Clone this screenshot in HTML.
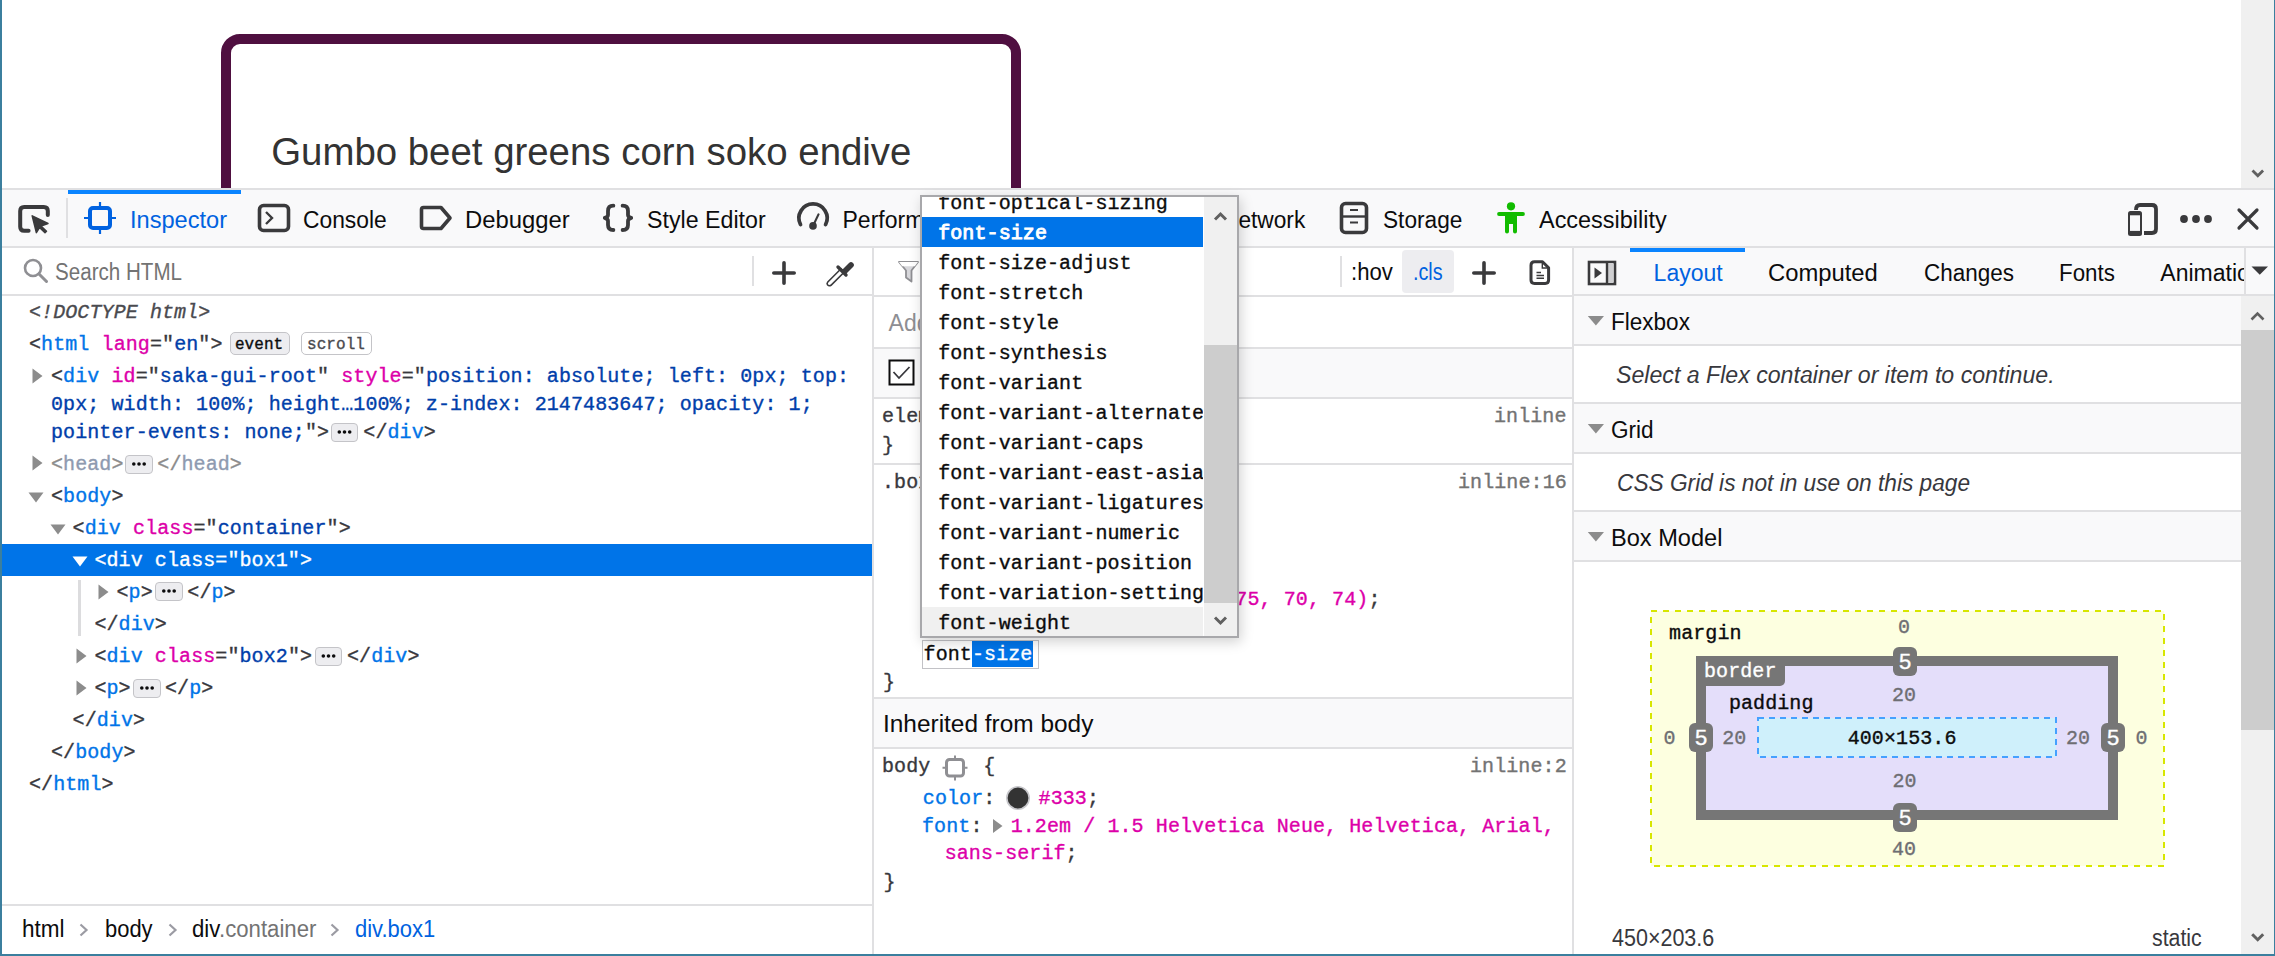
<!DOCTYPE html>
<html lang="en"><head><meta charset="utf-8"><title>DevTools</title>
<style>
html,body{margin:0;padding:0;width:2275px;height:956px;overflow:hidden;background:#fff;}
.r{position:absolute;box-sizing:content-box;}
.t{position:absolute;line-height:0;white-space:pre;transform-origin:0 0;}
svg.r{overflow:visible;}
</style></head><body>
<div class="r" style="left:0px;top:0px;width:2275px;height:188px;background:#ffffff;"></div>
<div class="r" style="left:221px;top:34px;width:780px;height:200px;border:10px solid #4f0f40;border-radius:19px;"></div>
<div class="t" style="left:271.20px;top:151.69px;font-family:'Liberation Sans', sans-serif;font-size:38.4px;color:#333333;">Gumbo beet greens corn soko endive</div>
<div class="r" style="left:2241px;top:0px;width:33px;height:188px;background:#f0f0f0;"></div>
<svg class="r" style="left:2250px;top:168px;" width="16" height="12" viewBox="0 0 16 12"><path d="M2.5 2.5 L7.8 7.8 L13.1 2.5" fill="none" stroke="#606060" stroke-width="2.8"/></svg>
<div class="r" style="left:0px;top:188px;width:2275px;height:60px;background:#f9f9fa;"></div>
<div class="r" style="left:0px;top:188px;width:2275px;height:2px;background:#e0e0e2;"></div>
<div class="r" style="left:0px;top:246px;width:2275px;height:2px;background:#e0e0e2;"></div>
<svg class="r" style="left:16px;top:203px;" width="36" height="32" viewBox="0 0 36 32"><path d="M12.6 27.7 H8.2 Q4.2 27.7 4.2 23.7 V8 Q4.2 4 8.2 4 H27.8 Q31.8 4 31.8 8 V12" fill="none" stroke="#3a3a3c" stroke-width="4" stroke-linecap="round"/><path d="M16.2 12.8 L32 20.5 L25 23 L30.5 28.3 L29 29.8 L23.5 24.5 L20.4 29.7 Z" fill="#3a3a3c" stroke="#3a3a3c" stroke-width="1.5" stroke-linejoin="round"/></svg>
<div class="r" style="left:66px;top:198px;width:2px;height:40px;background:#e0e0e2;"></div>
<div class="r" style="left:68px;top:190px;width:173px;height:4px;background:#0a84ff;"></div>
<svg class="r" style="left:82px;top:200px;" width="36" height="36" viewBox="0 0 36 36"><rect x="8" y="8" width="20" height="20" rx="3" fill="none" stroke="#0062e0" stroke-width="4"/><path d="M18 2 V6 M18 30 V34 M2 18 H6 M30 18 H34" stroke="#0062e0" stroke-width="2.2"/></svg>
<div class="t" style="left:130.00px;top:220.03px;font-family:'Liberation Sans', sans-serif;font-size:23px;color:#0062e0;transform:scaleX(1.0264);">Inspector</div>
<svg class="r" style="left:256px;top:202px;" width="36" height="32" viewBox="0 0 36 32"><rect x="3.5" y="3.5" width="29" height="25" rx="4" fill="none" stroke="#3a3a3c" stroke-width="3.6"/><path d="M10 10 L16 16 L10 22" fill="none" stroke="#3a3a3c" stroke-width="2.4"/></svg>
<div class="t" style="left:303.10px;top:220.03px;font-family:'Liberation Sans', sans-serif;font-size:23px;color:#0c0c0d;transform:scaleX(0.9917);">Console</div>
<svg class="r" style="left:418px;top:204px;" width="36" height="28" viewBox="0 0 36 28"><path d="M5.5 3.5 H23 L32 14 L23 24.5 H5.5 Q3.5 24.5 3.5 22.5 V5.5 Q3.5 3.5 5.5 3.5 Z" fill="none" stroke="#3a3a3c" stroke-width="3.6" stroke-linejoin="round"/></svg>
<div class="t" style="left:464.80px;top:220.03px;font-family:'Liberation Sans', sans-serif;font-size:23px;color:#0c0c0d;transform:scaleX(1.0366);">Debugger</div>
<svg class="r" style="left:600px;top:202px;" width="36" height="32" viewBox="0 0 36 32"><path d="M13.4 3.7 Q8 3.7 8 9 V13 Q8 15 4.8 15.9 Q8 17 8 19 V23 Q8 28 13.4 28" fill="none" stroke="#3a3a3c" stroke-width="3.8" stroke-linecap="round" stroke-linejoin="round"/><path d="M22.6 3.7 Q28 3.7 28 9 V13 Q28 15 31.2 15.9 Q28 17 28 19 V23 Q28 28 22.6 28" fill="none" stroke="#3a3a3c" stroke-width="3.8" stroke-linecap="round" stroke-linejoin="round"/></svg>
<div class="t" style="left:646.60px;top:220.03px;font-family:'Liberation Sans', sans-serif;font-size:23px;color:#0c0c0d;transform:scaleX(1.0085);">Style Editor</div>
<svg class="r" style="left:795px;top:199px;" width="36" height="34" viewBox="0 0 36 34"><path d="M5.5 25.5 A14.1 14.1 0 1 1 30.6 25.5" fill="none" stroke="#3a3a3c" stroke-width="3.8" stroke-linecap="round"/><path d="M18 26.9 L23.5 15.4" stroke="#3a3a3c" stroke-width="2.2" stroke-linecap="round"/><circle cx="18" cy="26.9" r="3.8" fill="#3a3a3c"/></svg>
<div class="t" style="left:842.50px;top:220.03px;font-family:'Liberation Sans', sans-serif;font-size:23px;color:#0c0c0d;">Performance</div>
<div class="t" style="left:1221.60px;top:220.03px;font-family:'Liberation Sans', sans-serif;font-size:23px;color:#0c0c0d;transform:scaleX(0.9870);">Network</div>
<svg class="r" style="left:1338px;top:200px;" width="32" height="36" viewBox="0 0 32 36"><rect x="3.5" y="3.5" width="25" height="29" rx="4" fill="none" stroke="#3a3a3c" stroke-width="3.6"/><path d="M12 10 H20 M12 22.5 H20" stroke="#3a3a3c" stroke-width="2.2"/><path d="M4 16.5 H28" stroke="#3a3a3c" stroke-width="2.4"/></svg>
<div class="t" style="left:1383.00px;top:220.03px;font-family:'Liberation Sans', sans-serif;font-size:23px;color:#0c0c0d;transform:scaleX(0.9851);">Storage</div>
<svg class="r" style="left:1494px;top:200px;" width="34" height="36" viewBox="0 0 34 36"><circle cx="17" cy="6.3" r="4.1" fill="#12bc00"/><path d="M5 14 H29" stroke="#12bc00" stroke-width="3.8" stroke-linecap="round"/><path d="M11 14 H23 V24 H11 Z" fill="#12bc00"/><path d="M13 23 V31.5 M21 23 V31.5" stroke="#12bc00" stroke-width="4" stroke-linecap="round"/></svg>
<div class="t" style="left:1539.10px;top:220.03px;font-family:'Liberation Sans', sans-serif;font-size:23px;color:#0c0c0d;transform:scaleX(1.0192);">Accessibility</div>
<svg class="r" style="left:2126px;top:201px;" width="34" height="36" viewBox="0 0 34 36"><path d="M10 9 Q10 4 14 4 H26 Q30 4 30 8 V28 Q30 32 26 32 H18" fill="none" stroke="#3a3a3c" stroke-width="3.8"/><rect x="1.2" y="9.2" width="15.6" height="25.6" rx="3" fill="#f9f9fa"/><rect x="2" y="10" width="14" height="25" rx="2.5" fill="#3a3a3c"/><rect x="4" y="14.3" width="10" height="15.6" fill="#f9f9fa"/></svg>
<svg class="r" style="left:2178px;top:213px;" width="36" height="12" viewBox="0 0 36 12"><circle cx="6" cy="6" r="3.9" fill="#3a3a3c"/><circle cx="18" cy="6" r="3.9" fill="#3a3a3c"/><circle cx="30" cy="6" r="3.9" fill="#3a3a3c"/></svg>
<svg class="r" style="left:2234px;top:205px;" width="28" height="28" viewBox="0 0 28 28"><path d="M5 5 L23 23 M23 5 L5 23" stroke="#3a3a3c" stroke-width="3.2" stroke-linecap="round"/></svg>
<div class="r" style="left:2px;top:248px;width:871px;height:48px;background:#ffffff;"></div>
<div class="r" style="left:2px;top:294px;width:871px;height:2px;background:#e0e0e2;"></div>
<svg class="r" style="left:20px;top:254px;" width="32" height="32" viewBox="0 0 32 32"><circle cx="13" cy="14" r="8" fill="none" stroke="#8f8f93" stroke-width="2.6"/><path d="M19 20 L26.5 27.5" stroke="#8f8f93" stroke-width="3" stroke-linecap="round"/></svg>
<div class="t" style="left:55.10px;top:272.03px;font-family:'Liberation Sans', sans-serif;font-size:23px;color:#737373;transform:scaleX(0.8950);">Search HTML</div>
<div class="r" style="left:752px;top:256px;width:2px;height:30px;background:#e0e0e2;"></div>
<svg class="r" style="left:768px;top:257px;" width="32" height="32" viewBox="0 0 32 32"><path d="M16 5.8 V26.2 M5.8 16 H26.2" stroke="#3a3a3c" stroke-width="3.6" stroke-linecap="round"/></svg>
<svg class="r" style="left:824px;top:257px;" width="32" height="32" viewBox="0 0 32 32"><path d="M3.5 27.8 Q2.5 26.5 3.8 25 L17 11.8 L20.3 15.1 L7 28.3 Q5 29.5 3.5 27.8 Z" fill="none" stroke="#3a3a3c" stroke-width="1.6"/><path d="M14 10 L22 18" stroke="#3a3a3c" stroke-width="3.4" stroke-linecap="round"/><path d="M17.5 13.5 L25 6 Q27 4 29 6 Q31 8 29 10 L21.5 17.5 Z" fill="#3a3a3c"/></svg>
<div class="r" style="left:872px;top:248px;width:2px;height:708px;background:#e0e0e2;"></div>
<div class="r" style="left:874px;top:248px;width:698px;height:49px;background:#ffffff;"></div>
<div class="r" style="left:874px;top:295px;width:698px;height:2px;background:#e0e0e2;"></div>
<svg class="r" style="left:896px;top:259px;" width="26" height="26" viewBox="0 0 26 26"><path d="M3 3 H22 L15.5 11.5 V22.5 L10 18.5 V11.5 Z" fill="#d7d7db" stroke="#8f8f93" stroke-width="1.8" stroke-linejoin="round"/><path d="M3 3 H22 L18.8 7.2 H6.2 Z" fill="#ffffff"/></svg>
<div class="r" style="left:1340px;top:256px;width:2px;height:31px;background:#e0e0e2;"></div>
<div class="t" style="left:1350.50px;top:272.03px;font-family:'Liberation Sans', sans-serif;font-size:23px;color:#0c0c0d;transform:scaleX(0.9632);">:hov</div>
<div class="r" style="left:1402px;top:250px;width:52px;height:43px;background:#ededf0;border-radius:4px;"></div>
<div class="t" style="left:1413.40px;top:272.03px;font-family:'Liberation Sans', sans-serif;font-size:23px;color:#0062e0;transform:scaleX(0.8580);">.cls</div>
<svg class="r" style="left:1468px;top:257px;" width="32" height="32" viewBox="0 0 32 32"><path d="M16 5.8 V26.2 M5.8 16 H26.2" stroke="#3a3a3c" stroke-width="3.6" stroke-linecap="round"/></svg>
<svg class="r" style="left:1526px;top:258px;" width="28" height="30" viewBox="0 0 28 30"><path d="M8.5 3.7 H16.5 L22.6 9.8 V22 Q22.6 25.4 19.2 25.4 H8.5 Q5 25.4 5 22 V7.2 Q5 3.7 8.5 3.7 Z" fill="none" stroke="#3a3a3c" stroke-width="3" stroke-linejoin="round"/><path d="M16.3 3.8 V10 H22.5" fill="none" stroke="#3a3a3c" stroke-width="1.4"/><path d="M10.5 14.5 H15 M10.5 17.5 H18 M10.5 20.3 H18" stroke="#3a3a3c" stroke-width="1.6"/></svg>
<div class="r" style="left:1572px;top:248px;width:2px;height:708px;background:#e0e0e2;"></div>
<div class="r" style="left:1574px;top:248px;width:701px;height:48px;background:#f9f9fa;"></div>
<div class="r" style="left:1574px;top:294px;width:701px;height:2px;background:#e0e0e2;"></div>
<svg class="r" style="left:1586px;top:259px;" width="32" height="28" viewBox="0 0 32 28"><rect x="3" y="3" width="26" height="22" fill="none" stroke="#3a3a3c" stroke-width="2.6"/><rect x="21" y="4" width="6" height="20" fill="#cfcfd1"/><path d="M21 3 V25" stroke="#3a3a3c" stroke-width="2.4"/><path d="M8.5 8.5 L16 14 L8.5 19.5 Z" fill="#3a3a3c"/></svg>
<div class="r" style="left:1630px;top:248px;width:115px;height:4px;background:#0a84ff;"></div>
<div class="t" style="left:1653.60px;top:272.53px;font-family:'Liberation Sans', sans-serif;font-size:23px;color:#0062e0;">Layout</div>
<div class="t" style="left:1767.70px;top:272.53px;font-family:'Liberation Sans', sans-serif;font-size:23px;color:#0c0c0d;transform:scaleX(1.0349);">Computed</div>
<div class="t" style="left:1923.60px;top:272.53px;font-family:'Liberation Sans', sans-serif;font-size:23px;color:#0c0c0d;transform:scaleX(0.9761);">Changes</div>
<div class="t" style="left:2059.20px;top:272.53px;font-family:'Liberation Sans', sans-serif;font-size:23px;color:#0c0c0d;transform:scaleX(0.9704);">Fonts</div>
<div class="r" style="left:2150px;top:250px;width:94px;height:44px;overflow:hidden;">
<div class="t" style="left:10.30px;top:22.53px;font-family:'Liberation Sans', sans-serif;font-size:23px;color:#0c0c0d;">Animations</div>
</div>
<div class="r" style="left:2244px;top:248px;width:2px;height:46px;background:#e0e0e2;"></div>
<svg class="r" style="left:2250px;top:264px;" width="20" height="14" viewBox="0 0 20 14"><path d="M1.5 2.5 H18 L9.75 10.8 Z" fill="#3a3a3c"/></svg>
<div class="r" style="left:2px;top:296px;width:870px;height:608px;background:#ffffff;"></div>
<div class="t" style="left:29.00px;top:313.18px;font-family:'Liberation Mono', monospace;font-size:20px;-webkit-text-stroke-width:0.35px;letter-spacing:0.090px;"><span style="color:#4a4a4f;font-style:italic;">&lt;!DOCTYPE html&gt;</span></div>
<div class="t" style="left:29.00px;top:345.18px;font-family:'Liberation Mono', monospace;font-size:20px;-webkit-text-stroke-width:0.35px;letter-spacing:0.090px;"><span style="color:#38383d;">&lt;</span><span style="color:#0074e8;">html</span><span style="color:#38383d;"> </span><span style="color:#dd00a9;">lang</span><span style="color:#38383d;">=&quot;</span><span style="color:#003eaa;">en</span><span style="color:#38383d;">&quot;&gt;</span></div>
<div class="r" style="left:230px;top:332px;width:58px;height:21px;background:#ededf0;border:1.5px solid #c4c4c8;border-radius:5px;"></div>
<div class="t" style="left:234.90px;top:345.34px;font-family:'Liberation Mono', monospace;font-size:16px;-webkit-text-stroke-width:0.35px;letter-spacing:0.072px;"><span style="color:#0c0c0d;">event</span></div>
<div class="r" style="left:301px;top:332px;width:69px;height:21px;background:#ffffff;border:1.5px solid #c4c4c8;border-radius:5px;"></div>
<div class="t" style="left:307.00px;top:345.34px;font-family:'Liberation Mono', monospace;font-size:16px;-webkit-text-stroke-width:0.35px;letter-spacing:0.072px;"><span style="color:#4a4a4f;">scroll</span></div>
<svg class="r" style="left:32px;top:368px;" width="11" height="16" viewBox="0 0 11 16"><path d="M0.5 0.5 L10.5 8 L0.5 15.5 Z" fill="#8c8c8c"/></svg>
<div class="t" style="left:51.00px;top:377.48px;font-family:'Liberation Mono', monospace;font-size:20px;-webkit-text-stroke-width:0.35px;letter-spacing:0.090px;"><span style="color:#38383d;">&lt;</span><span style="color:#0074e8;">div</span><span style="color:#38383d;"> </span><span style="color:#dd00a9;">id</span><span style="color:#38383d;">=&quot;</span><span style="color:#003eaa;">saka-gui-root</span><span style="color:#38383d;">&quot; </span><span style="color:#dd00a9;">style</span><span style="color:#38383d;">=&quot;</span><span style="color:#003eaa;">position: absolute; left: 0px; top:</span></div>
<div class="t" style="left:51.00px;top:405.38px;font-family:'Liberation Mono', monospace;font-size:20px;-webkit-text-stroke-width:0.35px;letter-spacing:0.090px;"><span style="color:#003eaa;">0px; width: 100%; height…100%; z-index: 2147483647; opacity: 1;</span></div>
<div class="t" style="left:51.00px;top:432.98px;font-family:'Liberation Mono', monospace;font-size:20px;-webkit-text-stroke-width:0.35px;letter-spacing:0.090px;"><span style="color:#003eaa;">pointer-events: none;</span><span style="color:#38383d;">&quot;&gt;</span></div>
<div class="r" style="left:331px;top:423px;width:25px;height:17px;background:#ededf0;border:1px solid #c4c4c8;border-radius:4px;"></div>
<svg class="r" style="left:335px;top:429px;" width="18" height="6" viewBox="0 0 18 6"><circle cx="4.30" cy="3" r="1.8" fill="#0c0c0d"/><circle cx="9.50" cy="3" r="1.8" fill="#0c0c0d"/><circle cx="14.70" cy="3" r="1.8" fill="#0c0c0d"/></svg>
<div class="t" style="left:363.30px;top:432.98px;font-family:'Liberation Mono', monospace;font-size:20px;-webkit-text-stroke-width:0.35px;letter-spacing:0.090px;"><span style="color:#38383d;">&lt;/</span><span style="color:#0074e8;">div</span><span style="color:#38383d;">&gt;</span></div>
<svg class="r" style="left:32px;top:455px;" width="11" height="16" viewBox="0 0 11 16"><path d="M0.5 0.5 L10.5 8 L0.5 15.5 Z" fill="#8c8c8c"/></svg>
<div class="t" style="left:51.00px;top:464.88px;font-family:'Liberation Mono', monospace;font-size:20px;-webkit-text-stroke-width:0.35px;letter-spacing:0.090px;"><span style="color:#8c8c8c;">&lt;</span><span style="color:#8e9ab0;">head</span><span style="color:#8c8c8c;">&gt;</span></div>
<div class="r" style="left:125px;top:455px;width:26px;height:17px;background:#ededf0;border:1px solid #c4c4c8;border-radius:4px;"></div>
<svg class="r" style="left:130px;top:461px;" width="18" height="6" viewBox="0 0 18 6"><circle cx="3.80" cy="3" r="1.8" fill="#0c0c0d"/><circle cx="9.00" cy="3" r="1.8" fill="#0c0c0d"/><circle cx="14.20" cy="3" r="1.8" fill="#0c0c0d"/></svg>
<div class="t" style="left:157.30px;top:464.88px;font-family:'Liberation Mono', monospace;font-size:20px;-webkit-text-stroke-width:0.35px;letter-spacing:0.090px;"><span style="color:#8c8c8c;">&lt;/</span><span style="color:#8e9ab0;">head</span><span style="color:#8c8c8c;">&gt;</span></div>
<svg class="r" style="left:28px;top:492px;" width="16" height="11" viewBox="0 0 16 11"><path d="M0.5 0.5 H15.5 L8 10.5 Z" fill="#8c8c8c"/></svg>
<div class="t" style="left:51.00px;top:497.18px;font-family:'Liberation Mono', monospace;font-size:20px;-webkit-text-stroke-width:0.35px;letter-spacing:0.090px;"><span style="color:#38383d;">&lt;</span><span style="color:#0074e8;">body</span><span style="color:#38383d;">&gt;</span></div>
<svg class="r" style="left:50px;top:524px;" width="16" height="11" viewBox="0 0 16 11"><path d="M0.5 0.5 H15.5 L8 10.5 Z" fill="#8c8c8c"/></svg>
<div class="t" style="left:72.60px;top:529.08px;font-family:'Liberation Mono', monospace;font-size:20px;-webkit-text-stroke-width:0.35px;letter-spacing:0.090px;"><span style="color:#38383d;">&lt;</span><span style="color:#0074e8;">div</span><span style="color:#38383d;"> </span><span style="color:#dd00a9;">class</span><span style="color:#38383d;">=&quot;</span><span style="color:#003eaa;">container</span><span style="color:#38383d;">&quot;&gt;</span></div>
<div class="r" style="left:2px;top:544px;width:870px;height:32px;background:#0074e8;"></div>
<svg class="r" style="left:72px;top:556px;" width="16" height="11" viewBox="0 0 16 11"><path d="M0.5 0.5 H15.5 L8 10.5 Z" fill="#ffffff"/></svg>
<div class="t" style="left:94.40px;top:560.98px;font-family:'Liberation Mono', monospace;font-size:20px;-webkit-text-stroke-width:0.35px;letter-spacing:0.090px;"><span style="color:#ffffff;">&lt;div class=&quot;box1&quot;&gt;</span></div>
<div class="r" style="left:78px;top:580px;width:3px;height:56px;background:#dcdcde;"></div>
<svg class="r" style="left:98px;top:584px;" width="11" height="16" viewBox="0 0 11 16"><path d="M0.5 0.5 L10.5 8 L0.5 15.5 Z" fill="#8c8c8c"/></svg>
<div class="t" style="left:116.50px;top:592.88px;font-family:'Liberation Mono', monospace;font-size:20px;-webkit-text-stroke-width:0.35px;letter-spacing:0.090px;"><span style="color:#38383d;">&lt;</span><span style="color:#0074e8;">p</span><span style="color:#38383d;">&gt;</span></div>
<div class="r" style="left:155px;top:582px;width:26px;height:17px;background:#ededf0;border:1px solid #c4c4c8;border-radius:4px;"></div>
<svg class="r" style="left:160px;top:588px;" width="18" height="6" viewBox="0 0 18 6"><circle cx="3.80" cy="3" r="1.8" fill="#0c0c0d"/><circle cx="9.00" cy="3" r="1.8" fill="#0c0c0d"/><circle cx="14.20" cy="3" r="1.8" fill="#0c0c0d"/></svg>
<div class="t" style="left:187.30px;top:592.88px;font-family:'Liberation Mono', monospace;font-size:20px;-webkit-text-stroke-width:0.35px;letter-spacing:0.090px;"><span style="color:#38383d;">&lt;/</span><span style="color:#0074e8;">p</span><span style="color:#38383d;">&gt;</span></div>
<div class="t" style="left:94.40px;top:624.68px;font-family:'Liberation Mono', monospace;font-size:20px;-webkit-text-stroke-width:0.35px;letter-spacing:0.090px;"><span style="color:#38383d;">&lt;/</span><span style="color:#0074e8;">div</span><span style="color:#38383d;">&gt;</span></div>
<svg class="r" style="left:76px;top:648px;" width="11" height="16" viewBox="0 0 11 16"><path d="M0.5 0.5 L10.5 8 L0.5 15.5 Z" fill="#8c8c8c"/></svg>
<div class="t" style="left:94.40px;top:656.98px;font-family:'Liberation Mono', monospace;font-size:20px;-webkit-text-stroke-width:0.35px;letter-spacing:0.090px;"><span style="color:#38383d;">&lt;</span><span style="color:#0074e8;">div</span><span style="color:#38383d;"> </span><span style="color:#dd00a9;">class</span><span style="color:#38383d;">=&quot;</span><span style="color:#003eaa;">box2</span><span style="color:#38383d;">&quot;&gt;</span></div>
<div class="r" style="left:315px;top:647px;width:25px;height:17px;background:#ededf0;border:1px solid #c4c4c8;border-radius:4px;"></div>
<svg class="r" style="left:319px;top:653px;" width="18" height="6" viewBox="0 0 18 6"><circle cx="4.30" cy="3" r="1.8" fill="#0c0c0d"/><circle cx="9.50" cy="3" r="1.8" fill="#0c0c0d"/><circle cx="14.70" cy="3" r="1.8" fill="#0c0c0d"/></svg>
<div class="t" style="left:347.00px;top:656.98px;font-family:'Liberation Mono', monospace;font-size:20px;-webkit-text-stroke-width:0.35px;letter-spacing:0.090px;"><span style="color:#38383d;">&lt;/</span><span style="color:#0074e8;">div</span><span style="color:#38383d;">&gt;</span></div>
<svg class="r" style="left:76px;top:680px;" width="11" height="16" viewBox="0 0 11 16"><path d="M0.5 0.5 L10.5 8 L0.5 15.5 Z" fill="#8c8c8c"/></svg>
<div class="t" style="left:94.40px;top:688.98px;font-family:'Liberation Mono', monospace;font-size:20px;-webkit-text-stroke-width:0.35px;letter-spacing:0.090px;"><span style="color:#38383d;">&lt;</span><span style="color:#0074e8;">p</span><span style="color:#38383d;">&gt;</span></div>
<div class="r" style="left:133px;top:679px;width:26px;height:17px;background:#ededf0;border:1px solid #c4c4c8;border-radius:4px;"></div>
<svg class="r" style="left:138px;top:685px;" width="18" height="6" viewBox="0 0 18 6"><circle cx="3.80" cy="3" r="1.8" fill="#0c0c0d"/><circle cx="9.00" cy="3" r="1.8" fill="#0c0c0d"/><circle cx="14.20" cy="3" r="1.8" fill="#0c0c0d"/></svg>
<div class="t" style="left:165.00px;top:688.98px;font-family:'Liberation Mono', monospace;font-size:20px;-webkit-text-stroke-width:0.35px;letter-spacing:0.090px;"><span style="color:#38383d;">&lt;/</span><span style="color:#0074e8;">p</span><span style="color:#38383d;">&gt;</span></div>
<div class="t" style="left:72.60px;top:720.98px;font-family:'Liberation Mono', monospace;font-size:20px;-webkit-text-stroke-width:0.35px;letter-spacing:0.090px;"><span style="color:#38383d;">&lt;/</span><span style="color:#0074e8;">div</span><span style="color:#38383d;">&gt;</span></div>
<div class="t" style="left:51.00px;top:752.98px;font-family:'Liberation Mono', monospace;font-size:20px;-webkit-text-stroke-width:0.35px;letter-spacing:0.090px;"><span style="color:#38383d;">&lt;/</span><span style="color:#0074e8;">body</span><span style="color:#38383d;">&gt;</span></div>
<div class="t" style="left:29.00px;top:784.98px;font-family:'Liberation Mono', monospace;font-size:20px;-webkit-text-stroke-width:0.35px;letter-spacing:0.090px;"><span style="color:#38383d;">&lt;/</span><span style="color:#0074e8;">html</span><span style="color:#38383d;">&gt;</span></div>
<div class="r" style="left:2px;top:904px;width:870px;height:2px;background:#e0e0e2;"></div>
<div class="r" style="left:2px;top:906px;width:870px;height:48px;background:#ffffff;"></div>
<div class="t" style="left:22.40px;top:929.03px;font-family:'Liberation Sans', sans-serif;font-size:23px;color:#0c0c0d;transform:scaleX(0.9793);">html</div>
<div class="t" style="left:105.20px;top:929.03px;font-family:'Liberation Sans', sans-serif;font-size:23px;color:#0c0c0d;transform:scaleX(0.9539);">body</div>
<svg class="r" style="left:78px;top:923px;" width="12" height="14" viewBox="0 0 12 14"><path d="M2.5 1.5 L8.5 7 L2.5 12.5" fill="none" stroke="#9b9ba3" stroke-width="2.2"/></svg>
<svg class="r" style="left:167px;top:923px;" width="12" height="14" viewBox="0 0 12 14"><path d="M2.5 1.5 L8.5 7 L2.5 12.5" fill="none" stroke="#9b9ba3" stroke-width="2.2"/></svg>
<svg class="r" style="left:329px;top:923px;" width="12" height="14" viewBox="0 0 12 14"><path d="M2.5 1.5 L8.5 7 L2.5 12.5" fill="none" stroke="#9b9ba3" stroke-width="2.2"/></svg>
<div class="t" style="left:192.30px;top:929.03px;font-family:'Liberation Sans', sans-serif;font-size:23px;color:#0c0c0d;transform:scaleX(0.9640);">div</div>
<div class="t" style="left:219.14px;top:929.03px;font-family:'Liberation Sans', sans-serif;font-size:23px;color:#737373;transform:scaleX(0.964)">.container</div>
<div class="t" style="left:355.00px;top:929.03px;font-family:'Liberation Sans', sans-serif;font-size:23px;color:#0062e0;transform:scaleX(0.9548);">div.box1</div>
<div class="r" style="left:874px;top:297px;width:698px;height:657px;background:#ffffff;"></div>
<div class="t" style="left:888.60px;top:322.53px;font-family:'Liberation Sans', sans-serif;font-size:23px;color:#8e8e93;">Add new class</div>
<div class="r" style="left:874px;top:347px;width:698px;height:2px;background:#e0e0e2;"></div>
<div class="r" style="left:874px;top:349px;width:698px;height:48px;background:#f9f9fa;"></div>
<div class="r" style="left:874px;top:397px;width:698px;height:2px;background:#e0e0e2;"></div>
<svg class="r" style="left:887px;top:358px;" width="30" height="30" viewBox="0 0 30 30"><rect x="2.5" y="2.5" width="24" height="24" fill="#fff" stroke="#0c0c0d" stroke-width="2"/><path d="M6.5 14 L12 20 L22.5 9" fill="none" stroke="#38383d" stroke-width="1.8"/></svg>
<div class="t" style="left:926.00px;top:372.03px;font-family:'Liberation Sans', sans-serif;font-size:23px;color:#0c0c0d;">box1</div>
<div class="t" style="left:882.00px;top:416.68px;font-family:'Liberation Mono', monospace;font-size:20px;-webkit-text-stroke-width:0.35px;letter-spacing:0.090px;"><span style="color:#38383d;">element </span><span style="color:#38383d;">{</span></div>
<div class="t" style="left:882.00px;top:445.68px;font-family:'Liberation Mono', monospace;font-size:20px;-webkit-text-stroke-width:0.35px;letter-spacing:0.090px;"><span style="color:#38383d;">}</span></div>
<div class="t" style="left:1494.00px;top:416.98px;font-family:'Liberation Mono', monospace;font-size:20px;-webkit-text-stroke-width:0.35px;letter-spacing:0.090px;"><span style="color:#737373;">inline</span></div>
<div class="r" style="left:874px;top:463px;width:698px;height:2px;background:#e0e0e2;"></div>
<div class="t" style="left:882.00px;top:483.18px;font-family:'Liberation Mono', monospace;font-size:20px;-webkit-text-stroke-width:0.35px;letter-spacing:0.090px;"><span style="color:#38383d;">.box1 </span><span style="color:#38383d;">{</span></div>
<div class="t" style="left:1458.00px;top:483.18px;font-family:'Liberation Mono', monospace;font-size:20px;-webkit-text-stroke-width:0.35px;letter-spacing:0.090px;"><span style="color:#737373;">inline:16</span></div>
<div class="t" style="left:922.00px;top:511.18px;font-family:'Liberation Mono', monospace;font-size:20px;-webkit-text-stroke-width:0.35px;letter-spacing:0.090px;"><span style="color:#0074e8;">width</span><span style="color:#38383d;">: </span><span style="color:#dd00a9;">400px</span><span style="color:#38383d;">;</span></div>
<div class="t" style="left:922.00px;top:543.18px;font-family:'Liberation Mono', monospace;font-size:20px;-webkit-text-stroke-width:0.35px;letter-spacing:0.090px;"><span style="color:#0074e8;">padding</span><span style="color:#38383d;">: </span><span style="color:#dd00a9;">20px</span><span style="color:#38383d;">;</span></div>
<div class="t" style="left:922.00px;top:571.18px;font-family:'Liberation Mono', monospace;font-size:20px;-webkit-text-stroke-width:0.35px;letter-spacing:0.090px;"><span style="color:#0074e8;">margin-bottom</span><span style="color:#38383d;">: </span><span style="color:#dd00a9;">40px</span><span style="color:#38383d;">;</span></div>
<div class="t" style="left:922.00px;top:599.68px;font-family:'Liberation Mono', monospace;font-size:20px;-webkit-text-stroke-width:0.35px;letter-spacing:0.090px;"><span style="color:#0074e8;">border</span><span style="color:#38383d;">: </span><span style="color:#dd00a9;">5px solid</span></div>
<div class="t" style="left:1187.00px;top:599.68px;font-family:'Liberation Mono', monospace;font-size:20px;-webkit-text-stroke-width:0.35px;letter-spacing:0.090px;"><span style="color:#dd00a9;">rgb(75, 70, 74)</span><span style="color:#38383d;">;</span></div>
<div class="t" style="left:922.00px;top:627.68px;font-family:'Liberation Mono', monospace;font-size:20px;-webkit-text-stroke-width:0.35px;letter-spacing:0.090px;"><span style="color:#0074e8;">border-radius</span><span style="color:#38383d;">: </span><span style="color:#dd00a9;">10px</span><span style="color:#38383d;">;</span></div>
<div class="r" style="left:922px;top:640px;width:115px;height:26.5px;background:#fff;border:1.5px solid #c2c2c6;"></div>
<div class="r" style="left:972px;top:641px;width:61px;height:26px;background:#0074e8;"></div>
<div class="t" style="left:923.60px;top:655.18px;font-family:'Liberation Mono', monospace;font-size:20px;-webkit-text-stroke-width:0.35px;letter-spacing:0.090px;"><span style="color:#0c0c0d;">font</span><span style="color:#ffffff;">-size</span></div>
<div class="t" style="left:883.00px;top:682.98px;font-family:'Liberation Mono', monospace;font-size:20px;-webkit-text-stroke-width:0.35px;letter-spacing:0.090px;"><span style="color:#38383d;">}</span></div>
<div class="r" style="left:874px;top:697px;width:698px;height:2px;background:#e0e0e2;"></div>
<div class="r" style="left:874px;top:699px;width:698px;height:48px;background:#f9f9fa;"></div>
<div class="t" style="left:883.40px;top:724.33px;font-family:'Liberation Sans', sans-serif;font-size:23px;color:#0c0c0d;transform:scaleX(1.0616);">Inherited from body</div>
<div class="r" style="left:874px;top:747px;width:698px;height:2px;background:#e0e0e2;"></div>
<div class="t" style="left:882.00px;top:766.68px;font-family:'Liberation Mono', monospace;font-size:20px;-webkit-text-stroke-width:0.35px;letter-spacing:0.090px;"><span style="color:#38383d;">body</span></div>
<svg class="r" style="left:940px;top:754px;" width="30" height="28" viewBox="0 0 30 28"><rect x="6.5" y="5.5" width="17" height="16.5" rx="3" fill="none" stroke="#8f8f93" stroke-width="3"/><path d="M15 1.5 V5.5 M15 22 V26.5 M2.5 13.8 H6.5 M23.5 13.8 H27.5" stroke="#8f8f93" stroke-width="2"/></svg>
<div class="t" style="left:983.20px;top:766.68px;font-family:'Liberation Mono', monospace;font-size:20px;-webkit-text-stroke-width:0.35px;letter-spacing:0.090px;"><span style="color:#38383d;">{</span></div>
<div class="t" style="left:922.80px;top:798.78px;font-family:'Liberation Mono', monospace;font-size:20px;-webkit-text-stroke-width:0.35px;letter-spacing:0.090px;"><span style="color:#0074e8;">color</span><span style="color:#38383d;">:</span></div>
<svg class="r" style="left:1005px;top:785px;" width="26" height="26" viewBox="0 0 26 26"><circle cx="13" cy="13" r="11.2" fill="#333333" stroke="#c8c8cc" stroke-width="1.6"/></svg>
<div class="t" style="left:1038.60px;top:798.78px;font-family:'Liberation Mono', monospace;font-size:20px;-webkit-text-stroke-width:0.35px;letter-spacing:0.090px;"><span style="color:#dd00a9;">#333</span><span style="color:#38383d;">;</span></div>
<div class="t" style="left:922.00px;top:826.58px;font-family:'Liberation Mono', monospace;font-size:20px;-webkit-text-stroke-width:0.35px;letter-spacing:0.090px;"><span style="color:#0074e8;">font</span><span style="color:#38383d;">:</span></div>
<svg class="r" style="left:992px;top:818px;" width="12" height="16" viewBox="0 0 12 16"><path d="M1 1 L10.5 8 L1 15 Z" fill="#8c8c8c"/></svg>
<div class="t" style="left:1010.70px;top:826.58px;font-family:'Liberation Mono', monospace;font-size:20px;-webkit-text-stroke-width:0.35px;letter-spacing:0.090px;"><span style="color:#dd00a9;">1.2em / 1.5 Helvetica Neue, Helvetica, Arial,</span></div>
<div class="t" style="left:944.70px;top:854.48px;font-family:'Liberation Mono', monospace;font-size:20px;-webkit-text-stroke-width:0.35px;letter-spacing:0.090px;"><span style="color:#dd00a9;">sans-serif</span><span style="color:#38383d;">;</span></div>
<div class="t" style="left:883.50px;top:883.08px;font-family:'Liberation Mono', monospace;font-size:20px;-webkit-text-stroke-width:0.35px;letter-spacing:0.090px;"><span style="color:#38383d;">}</span></div>
<div class="t" style="left:1470.00px;top:766.98px;font-family:'Liberation Mono', monospace;font-size:20px;-webkit-text-stroke-width:0.35px;letter-spacing:0.090px;"><span style="color:#737373;">inline:2</span></div>
<div class="r" style="left:1574px;top:296px;width:667px;height:658px;background:#ffffff;"></div>
<div class="r" style="left:1574px;top:296px;width:667px;height:48px;background:#f9f9fa;"></div>
<svg class="r" style="left:1586px;top:315px;" width="20" height="12" viewBox="0 0 20 12"><path d="M1.8 1 H18 L9.9 10.5 Z" fill="#8c8c8c"/></svg>
<div class="t" style="left:1610.90px;top:321.53px;font-family:'Liberation Sans', sans-serif;font-size:23px;color:#0c0c0d;transform:scaleX(0.9801);">Flexbox</div>
<div class="r" style="left:1574px;top:344px;width:667px;height:2px;background:#e0e0e2;"></div>
<div class="t" style="left:1616.30px;top:375.03px;font-family:'Liberation Sans', sans-serif;font-size:23px;color:#38383d;font-style:italic;transform:scaleX(1.0060);">Select a Flex container or item to continue.</div>
<div class="r" style="left:1574px;top:402px;width:667px;height:2px;background:#e0e0e2;"></div>
<div class="r" style="left:1574px;top:404px;width:667px;height:48px;background:#f9f9fa;"></div>
<svg class="r" style="left:1586px;top:423px;" width="20" height="12" viewBox="0 0 20 12"><path d="M1.8 1 H18 L9.9 10.5 Z" fill="#8c8c8c"/></svg>
<div class="t" style="left:1610.90px;top:429.53px;font-family:'Liberation Sans', sans-serif;font-size:23px;color:#0c0c0d;transform:scaleX(0.9816);">Grid</div>
<div class="r" style="left:1574px;top:452px;width:667px;height:2px;background:#e0e0e2;"></div>
<div class="t" style="left:1616.90px;top:483.03px;font-family:'Liberation Sans', sans-serif;font-size:23px;color:#38383d;font-style:italic;transform:scaleX(0.9863);">CSS Grid is not in use on this page</div>
<div class="r" style="left:1574px;top:510px;width:667px;height:2px;background:#e0e0e2;"></div>
<div class="r" style="left:1574px;top:512px;width:667px;height:48px;background:#f9f9fa;"></div>
<svg class="r" style="left:1586px;top:531px;" width="20" height="12" viewBox="0 0 20 12"><path d="M1.8 1 H18 L9.9 10.5 Z" fill="#8c8c8c"/></svg>
<div class="t" style="left:1610.90px;top:537.53px;font-family:'Liberation Sans', sans-serif;font-size:23px;color:#0c0c0d;transform:scaleX(1.0258);">Box Model</div>
<div class="r" style="left:1574px;top:560px;width:667px;height:2px;background:#e0e0e2;"></div>
<svg class="r" style="left:1649px;top:609px;" width="517" height="259" viewBox="0 0 517 259"><rect x="2" y="2" width="513" height="255" fill="#fdffe0" stroke="#d7e600" stroke-width="2" stroke-dasharray="6 6"/></svg>
<div class="t" style="left:1669.10px;top:634.48px;font-family:'Liberation Mono', monospace;font-size:20px;-webkit-text-stroke-width:0.35px;letter-spacing:0.090px;"><span style="color:#0c0c0d;">margin</span></div>
<div class="t" style="left:1897.90px;top:628.18px;font-family:'Liberation Mono', monospace;font-size:20px;-webkit-text-stroke-width:0.35px;letter-spacing:0.090px;"><span style="color:#6e6e73;">0</span></div>
<div class="r" style="left:1696px;top:656px;width:402px;height:144px;border:10px solid #767676;background:#e4defa;"></div>
<div class="r" style="left:1696px;top:656px;width:89px;height:30px;background:#767676;border-bottom-right-radius:5px;"></div>
<div class="t" style="left:1704.00px;top:671.68px;font-family:'Liberation Mono', monospace;font-size:20px;-webkit-text-stroke-width:0.35px;letter-spacing:0.090px;"><span style="color:#ffffff;">border</span></div>
<svg class="r" style="left:1757px;top:717px;" width="300" height="41" viewBox="0 0 300 41"><rect x="1" y="1" width="298" height="39" fill="#cff0fb" stroke="#45a1ff" stroke-width="2" stroke-dasharray="6 5"/></svg>
<div class="t" style="left:1728.90px;top:704.28px;font-family:'Liberation Mono', monospace;font-size:20px;-webkit-text-stroke-width:0.35px;letter-spacing:0.090px;"><span style="color:#0c0c0d;">padding</span></div>
<div class="t" style="left:1892.00px;top:695.98px;font-family:'Liberation Mono', monospace;font-size:20px;-webkit-text-stroke-width:0.35px;letter-spacing:0.090px;"><span style="color:#6e6e73;">20</span></div>
<div class="t" style="left:1847.70px;top:738.68px;font-family:'Liberation Mono', monospace;font-size:20px;-webkit-text-stroke-width:0.35px;letter-spacing:0.090px;"><span style="color:#0c0c0d;">400×153.6</span></div>
<div class="t" style="left:1663.50px;top:739.08px;font-family:'Liberation Mono', monospace;font-size:20px;-webkit-text-stroke-width:0.35px;letter-spacing:0.090px;"><span style="color:#6e6e73;">0</span></div>
<div class="t" style="left:1722.20px;top:739.08px;font-family:'Liberation Mono', monospace;font-size:20px;-webkit-text-stroke-width:0.35px;letter-spacing:0.090px;"><span style="color:#6e6e73;">20</span></div>
<div class="t" style="left:2065.90px;top:739.08px;font-family:'Liberation Mono', monospace;font-size:20px;-webkit-text-stroke-width:0.35px;letter-spacing:0.090px;"><span style="color:#6e6e73;">20</span></div>
<div class="t" style="left:2135.50px;top:739.08px;font-family:'Liberation Mono', monospace;font-size:20px;-webkit-text-stroke-width:0.35px;letter-spacing:0.090px;"><span style="color:#6e6e73;">0</span></div>
<div class="t" style="left:1892.50px;top:782.28px;font-family:'Liberation Mono', monospace;font-size:20px;-webkit-text-stroke-width:0.35px;letter-spacing:0.090px;"><span style="color:#6e6e73;">20</span></div>
<div class="t" style="left:1892.00px;top:850.08px;font-family:'Liberation Mono', monospace;font-size:20px;-webkit-text-stroke-width:0.35px;letter-spacing:0.090px;"><span style="color:#6e6e73;">40</span></div>
<div class="r" style="left:1893px;top:647px;width:24px;height:29px;background:#767676;border-radius:6px;"></div>
<div class="t" style="left:1898.50px;top:664.18px;font-family:'Liberation Mono', monospace;font-size:20px;-webkit-text-stroke-width:0.35px;letter-spacing:0.090px;"><span style="color:#ffffff;font-size:22px;">5</span></div>
<div class="r" style="left:1689px;top:723px;width:24px;height:29px;background:#767676;border-radius:6px;"></div>
<div class="t" style="left:1694.50px;top:740.18px;font-family:'Liberation Mono', monospace;font-size:20px;-webkit-text-stroke-width:0.35px;letter-spacing:0.090px;"><span style="color:#ffffff;font-size:22px;">5</span></div>
<div class="r" style="left:2101px;top:723px;width:24px;height:29px;background:#767676;border-radius:6px;"></div>
<div class="t" style="left:2106.50px;top:740.18px;font-family:'Liberation Mono', monospace;font-size:20px;-webkit-text-stroke-width:0.35px;letter-spacing:0.090px;"><span style="color:#ffffff;font-size:22px;">5</span></div>
<div class="r" style="left:1893px;top:803px;width:24px;height:29px;background:#767676;border-radius:6px;"></div>
<div class="t" style="left:1898.50px;top:820.18px;font-family:'Liberation Mono', monospace;font-size:20px;-webkit-text-stroke-width:0.35px;letter-spacing:0.090px;"><span style="color:#ffffff;font-size:22px;">5</span></div>
<div class="t" style="left:1611.70px;top:937.63px;font-family:'Liberation Sans', sans-serif;font-size:23px;color:#38383d;transform:scaleX(0.9351);">450×203.6</div>
<div class="t" style="left:2151.60px;top:937.63px;font-family:'Liberation Sans', sans-serif;font-size:23px;color:#38383d;transform:scaleX(0.9255);">static</div>
<div class="r" style="left:2241px;top:296px;width:33px;height:658px;background:#f0f0f0;"></div>
<div class="r" style="left:2241px;top:330px;width:33px;height:400px;background:#cdcdcd;"></div>
<svg class="r" style="left:2250px;top:311px;" width="16" height="10" viewBox="0 0 16 10"><path d="M1.5 8.5 L7.5 2.5 L13.5 8.5" fill="none" stroke="#606060" stroke-width="2.6"/></svg>
<svg class="r" style="left:2250px;top:932px;" width="16" height="12" viewBox="0 0 16 12"><path d="M2.2 2.2 L7.7 7.7 L13.2 2.2" fill="none" stroke="#606060" stroke-width="3"/></svg>
<div class="r" style="left:920px;top:195px;width:315px;height:439px;background:#ffffff;border:2px solid #a8a8ab;box-shadow:2px 4px 12px rgba(0,0,0,0.18);overflow:hidden;">
<div class="r" style="left:0;top:0;width:281px;height:439px;overflow:hidden;">
<div class="t" style="left:16.20px;top:6.68px;font-family:'Liberation Mono', monospace;font-size:20px;-webkit-text-stroke-width:0.35px;letter-spacing:0.090px;"><span style="color:#0c0c0d;">font-optical-sizing</span></div>
<div class="r" style="left:0px;top:20px;width:281px;height:30px;background:#0074e8;"></div>
<div class="t" style="left:16.20px;top:36.68px;font-family:'Liberation Mono', monospace;font-size:20px;-webkit-text-stroke-width:0.35px;letter-spacing:0.090px;"><span style="color:#ffffff;-webkit-text-stroke-width:0.9px;">font-size</span></div>
<div class="t" style="left:16.20px;top:66.68px;font-family:'Liberation Mono', monospace;font-size:20px;-webkit-text-stroke-width:0.35px;letter-spacing:0.090px;"><span style="color:#0c0c0d;">font-size-adjust</span></div>
<div class="t" style="left:16.20px;top:96.68px;font-family:'Liberation Mono', monospace;font-size:20px;-webkit-text-stroke-width:0.35px;letter-spacing:0.090px;"><span style="color:#0c0c0d;">font-stretch</span></div>
<div class="t" style="left:16.20px;top:126.68px;font-family:'Liberation Mono', monospace;font-size:20px;-webkit-text-stroke-width:0.35px;letter-spacing:0.090px;"><span style="color:#0c0c0d;">font-style</span></div>
<div class="t" style="left:16.20px;top:156.68px;font-family:'Liberation Mono', monospace;font-size:20px;-webkit-text-stroke-width:0.35px;letter-spacing:0.090px;"><span style="color:#0c0c0d;">font-synthesis</span></div>
<div class="t" style="left:16.20px;top:186.68px;font-family:'Liberation Mono', monospace;font-size:20px;-webkit-text-stroke-width:0.35px;letter-spacing:0.090px;"><span style="color:#0c0c0d;">font-variant</span></div>
<div class="t" style="left:16.20px;top:216.68px;font-family:'Liberation Mono', monospace;font-size:20px;-webkit-text-stroke-width:0.35px;letter-spacing:0.090px;"><span style="color:#0c0c0d;">font-variant-alternates</span></div>
<div class="t" style="left:16.20px;top:246.68px;font-family:'Liberation Mono', monospace;font-size:20px;-webkit-text-stroke-width:0.35px;letter-spacing:0.090px;"><span style="color:#0c0c0d;">font-variant-caps</span></div>
<div class="t" style="left:16.20px;top:276.68px;font-family:'Liberation Mono', monospace;font-size:20px;-webkit-text-stroke-width:0.35px;letter-spacing:0.090px;"><span style="color:#0c0c0d;">font-variant-east-asian</span></div>
<div class="t" style="left:16.20px;top:306.68px;font-family:'Liberation Mono', monospace;font-size:20px;-webkit-text-stroke-width:0.35px;letter-spacing:0.090px;"><span style="color:#0c0c0d;">font-variant-ligatures</span></div>
<div class="t" style="left:16.20px;top:336.68px;font-family:'Liberation Mono', monospace;font-size:20px;-webkit-text-stroke-width:0.35px;letter-spacing:0.090px;"><span style="color:#0c0c0d;">font-variant-numeric</span></div>
<div class="t" style="left:16.20px;top:366.68px;font-family:'Liberation Mono', monospace;font-size:20px;-webkit-text-stroke-width:0.35px;letter-spacing:0.090px;"><span style="color:#0c0c0d;">font-variant-position</span></div>
<div class="t" style="left:16.20px;top:396.68px;font-family:'Liberation Mono', monospace;font-size:20px;-webkit-text-stroke-width:0.35px;letter-spacing:0.090px;"><span style="color:#0c0c0d;">font-variation-settings</span></div>
<div class="r" style="left:0px;top:410px;width:281px;height:30px;background:#f0f0f0;"></div>
<div class="t" style="left:16.20px;top:426.68px;font-family:'Liberation Mono', monospace;font-size:20px;-webkit-text-stroke-width:0.35px;letter-spacing:0.090px;"><span style="color:#0c0c0d;">font-weight</span></div>
</div>
<div class="r" style="left:282px;top:0px;width:33px;height:439px;background:#f0f0f0;"></div>
<div class="r" style="left:282px;top:148px;width:33px;height:258px;background:#cdcdcd;"></div>
<svg class="r" style="left:290px;top:14px;" width="16" height="10" viewBox="0 0 16 10"><path d="M3 8.5 L8.5 3 L14 8.5" fill="none" stroke="#606060" stroke-width="3"/></svg>
<svg class="r" style="left:290px;top:419px;" width="16" height="10" viewBox="0 0 16 10"><path d="M3 1.5 L8.5 7 L14 1.5" fill="none" stroke="#606060" stroke-width="3"/></svg>
</div>
<div class="r" style="left:0px;top:0px;width:2px;height:956px;background:#3b7f9e;"></div>
<div class="r" style="left:0px;top:954px;width:2275px;height:2px;background:#3b7f9e;"></div>
<div class="r" style="left:2274px;top:0px;width:1px;height:956px;background:#3b7f9e;"></div>
</body></html>
